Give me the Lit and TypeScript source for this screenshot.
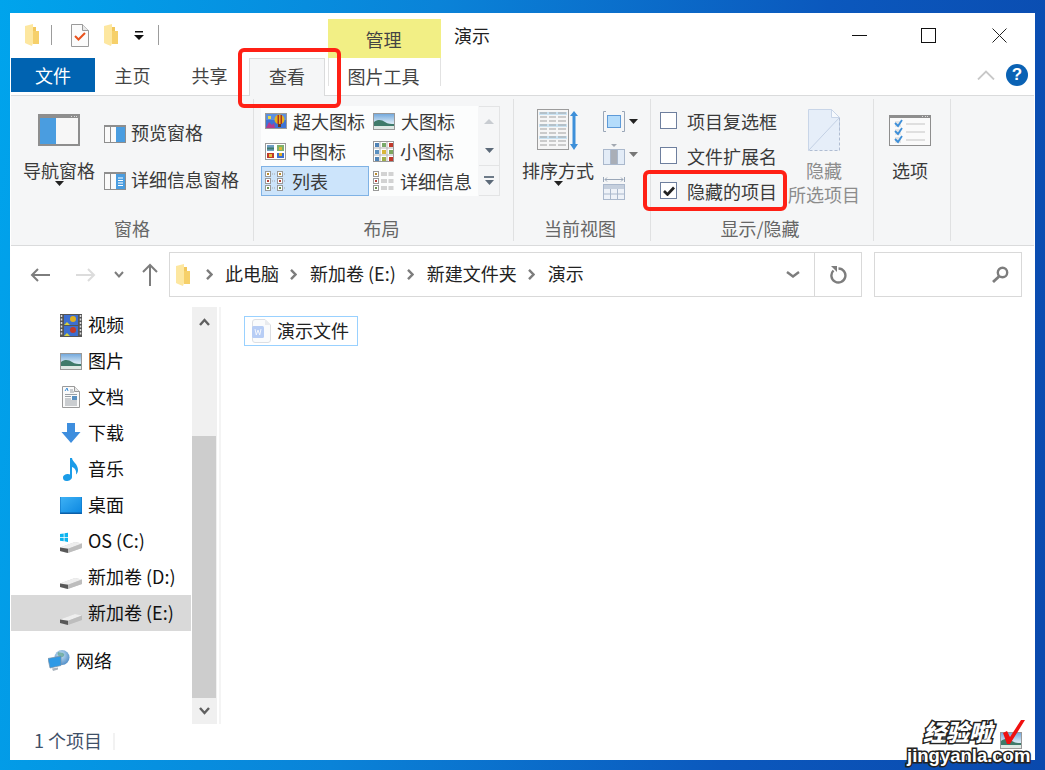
import { LitElement, html, css, svg } from "lit";
import { customElement } from "lit/decorators.js";

const icon = (w: number, h: number, body: unknown) =>
  html`<svg class="ico" width=${w} height=${h} viewBox="0 0 ${w} ${h}" fill="none">${body}</svg>`;

const folder = () => icon(14, 22, svg`
  <path d="M8 7h6v13H8z" fill="#f6d06a"/>
  <path d="M8 3h3v4H8z" fill="#f2c75c"/>
  <path d="M0 2l8-2v19l-1 3-5-2-2-1z" fill="#fde7a0"/>`);

const triDown = (c = "#222") => icon(9, 5, svg`<path d="M0 0h9L4.5 5z" fill=${c}/>`);
const qatDrop = () => icon(10, 9, svg`<path d="M1 0h8v1.500H1z" fill="#111"/><path d="M0 4h10L5 9z" fill="#111"/>`);

const checkDoc = () => icon(18, 23, svg`
  <path d="M.5.5h11l6 6v16H.5z" fill="#fbfbfb" stroke="#9a9a9a"/>
  <path d="M11.500.5v6h6" fill="#e8e8e8" stroke="#9a9a9a"/>
  <path d="M4 12l3.500 3.500L14 9" stroke="#e8521d" stroke-width="2"/>`);

const paneIcon = (kind: string) => kind === "nav"
  ? icon(42, 32, svg`
    <rect x="1" y="1" width="40" height="30" fill="#f7f7f7" stroke="#8e8e8e" stroke-width="2"/>
    <rect x="2" y="4" width="16" height="26" fill="#4a9de0"/>
    <rect x="2" y="2" width="38" height="2" fill="#8e8e8e"/>
    <path d="M33 2h1v1h-1zM36 2h1v1h-1zM38 2h1v1h-1z" fill="#ddd"/>`)
  : icon(22, 18, svg`
    <rect x=".5" y=".5" width="21" height="17" fill="#fafafa" stroke="#8e8e8e"/>
    <rect x="0" y="0" width="22" height="2" fill="#8e8e8e"/>
    <rect x="6" y="2" width="1" height="15" fill="#8e8e8e"/>
    <rect x="12" y="2" width="9" height="15" fill="#4a9de0"/>
    ${kind === "detail" ? svg`<path d="M14 6h5M14 8.500h5M14 11h5M14 13.500h5" stroke="#fff"/>` : ""}`);

const landscape = () => icon(22, 17, svg`
  <defs><linearGradient id="sky" x1="0" y1="0" x2="0" y2="1"><stop offset="0" stop-color="#6fa6dc"/><stop offset=".55" stop-color="#cfe3f2"/><stop offset="1" stop-color="#f0f5f5"/></linearGradient></defs>
  <rect x=".5" y=".5" width="21" height="16" fill="url(#sky)" stroke="#999"/>
  <path d="M1 9c4-3 8-2 11 0s6 2 9 2v2H1z" fill="#3f7a6a"/>
  <path d="M1 13h20v3H1z" fill="#dfe8e4"/>`);

const balloon = () => icon(22, 16, svg`
  <rect x=".5" y=".5" width="21" height="15" fill="#3d73d6" stroke="#9a9a9a"/>
  <rect x="1" y="1" width="20" height="6" fill="#5b8fe0"/>
  <ellipse cx="14.500" cy="6.500" rx="5" ry="5" fill="#e4b21c"/>
  <path d="M12.500 2h1.500v9h-1.500zM15.500 2H17v9h-1.500z" fill="#a8301f"/>
  <rect x="13" y="11" width="3" height="3" fill="#6a3a1c"/>
  <path d="M1 15l3-6 3 3 2-2 1 5z" fill="#b43c8e"/>
  <path d="M3 3h3v3H3z" fill="#e8d84a"/>`);

const medium = () => icon(21, 17, svg`
  <rect x=".5" y=".5" width="20" height="16" fill="#fff" stroke="#999"/>
  <rect x="2" y="2" width="7" height="6" fill="#6f9fc4"/><rect x="2" y="4.500" width="7" height="2" fill="#3f7a6a"/>
  <rect x="12" y="2" width="7" height="6" fill="#7fb06a"/><rect x="14" y="4" width="3" height="3" fill="#d9b63a"/>
  <rect x="2" y="10" width="7" height="5" fill="#c0392b"/><rect x="4" y="11" width="3" height="3" fill="#e4c13c"/>
  <rect x="12" y="10" width="7" height="5" fill="#3d6fd0"/><rect x="14" y="10" width="3" height="3" fill="#e6b020"/>`);

const small = () => {
  const cols = ["#4f83b5", "#79a96a", "#c0392b", "#5a90c0", "#d9b63a", "#7ca85f", "#4f83b5", "#9fb04a", "#c0392b"];
  return icon(21, 21, svg`
    <rect x=".5" y=".5" width="20" height="20" fill="#fff" stroke="#999"/>
    <path d="M7 1v19M14 1v19M1 7h19M1 14h19" stroke="#b5b5b5"/>
    ${cols.map((c, i) => svg`<rect x=${2 + (i % 3) * 7} y=${2 + Math.floor(i / 3) * 7} width="4" height="4" fill=${c}/>`)}`);
};

const listIco = () => icon(21, 20, svg`
  ${[0, 1].map((c) => [0, 1, 2].map((r) => svg`
    <rect x=${0.5 + c * 12} y=${0.5 + r * 7} width="5" height="5" fill="#fff" stroke="#999"/>
    <rect x=${2 + c * 12} y=${2 + r * 7} width="2" height="2" fill=${["#b98a2a", "#b5433a", "#6a8f4c"][r]}/>
    <path d="M${7 + c * 12} ${3 + r * 7}h3" stroke="#a8a8a8" stroke-dasharray="1 1"/>`))}`);

const detailIco = () => icon(21, 20, svg`
  ${[0, 1, 2].map((r) => svg`
    <rect x=".5" y=${0.5 + r * 7} width="5" height="5" fill="#fff" stroke="#999"/>
    <rect x="2" y=${2 + r * 7} width="2" height="2" fill=${["#b98a2a", "#b5433a", "#6a8f4c"][r]}/>
    <path d="M8 ${2 + r * 7}h6M15.500 ${2 + r * 7}h5M8 ${4 + r * 7}h6M15.500 ${4 + r * 7}h5" stroke="#a8a8a8"/>`)}`);

const sortIco = () => icon(42, 42, svg`
  <rect x=".5" y=".5" width="31" height="40" fill="#f6f6f6" stroke="#9c9c9c"/>
  ${[4, 8, 12, 16, 20, 24, 28, 32, 36].map((y, i) => svg`
    <rect x="2" y=${y - 1} width="28" height="3" fill=${i % 3 === 0 ? "#c9e2f2" : "#f6f6f6"}/>
    <path d="M3 ${y}h7M12 ${y}h7M21 ${y}h8" stroke="#a0a0a0"/>`)}
  <path d="M37 2l4 5h-2.500v28H41l-4 6-4-6h2.500V7H33z" fill="#3d8fd9"/>`);

const groupIco = () => icon(22, 21, svg`
  <path d="M3 .5H.5v20H3M19 .5h2.500v20H19" stroke="#9aa7b8"/>
  <rect x="4.500" y="4.500" width="13" height="12" fill="#b4dcfb" stroke="#5e9ad8"/>`);
const colsIco = () => icon(22, 21, svg`
  <path d="M8 0h6l-3 3z" fill="#a3a9b2"/>
  <rect x=".5" y="5.500" width="21" height="15" fill="#e3ecf7" stroke="#aab8cc"/>
  <rect x="8" y="6" width="6" height="14" fill="#a9aeb7"/>
  <path d="M7.500 6v14M14.500 6v14" stroke="#aab8cc"/>`);
const fitIco = () => icon(22, 23, svg`
  <path d="M.5 0v5M21.500 0v5M2 2.500h18" stroke="#9aa7b8"/>
  <path d="M4 .5l-2 2 2 2M18 .5l2 2-2 2" stroke="#9aa7b8"/>
  <rect x=".5" y="7.500" width="21" height="15" fill="#eef2f8" stroke="#aab8cc"/>
  <rect x="1" y="8" width="20" height="4" fill="#c5cfdd"/>
  <path d="M7.500 12v10M14.500 12v10M1 17h20" stroke="#aab8cc"/>`);

const hideIco = () => icon(32, 42, svg`
  <path d="M.5.5h23l8 8v33H.5z" fill="#e6eef9"/>
  <path d="M.5 41.500V.5h23l8 8v14" stroke="#c8d5e8"/>
  <path d="M31.500 8.500v33H.5" stroke="#b0bdd2" stroke-dasharray="3 2"/>
  <path d="M31.500 8.500L.5 41.500" stroke="#c3d0e4"/>
  <path d="M23.500.5v8h8z" fill="#f6f9fd" stroke="#c8d5e8"/>`);

const optIco = () => icon(42, 31, svg`
  <rect x=".5" y=".5" width="41" height="30" fill="#fafafa" stroke="#8e8e8e"/>
  <rect x="0" y="0" width="42" height="3" fill="#8e8e8e"/>
  <path d="M33 1h1v1h-1zM36 1h1v1h-1zM38 1h1v1h-1z" fill="#ddd"/>
  ${[6, 14, 22].map((y) => svg`
    <rect x="6" y=${y} width="6" height="6" fill="#e5e5e5"/>
    <path d="M6 ${y + 2}l3 3 4-6" stroke="#3d8fd9" stroke-width="1.800"/>
    <path d="M17 ${y + 3}h19" stroke="#c4c4c4"/>`)}`);

const chev = (c = "#7d7d7d") => icon(7, 11, svg`<path d="M1 .8l4.500 4.700L1 10.200" stroke=${c} stroke-width="2.400"/>`);
const arrowL = (c: string, flip = false) => icon(20, 14, svg`
  <path d=${flip ? "M0 7h18M12 1l6 6-6 6" : "M20 7H2M8 1L2 7l6 6"} stroke=${c} stroke-width="2"/>`);
const chevDown = (w = 10, c = "#7d7d7d", sw = 2) => icon(w, 7, svg`<path d="M1 1l${(w - 2) / 2} 4.500L${w - 1} 1" stroke=${c} stroke-width=${sw}/>`);
const up = () => icon(16, 23, svg`<path d="M8 23V2M1 9l7-7 7 7" stroke="#7d7d7d" stroke-width="2"/>`);

const refresh = () => icon(17, 18, svg`
  <path d="M3.500 4.500a7 7 0 1 0 5-2" stroke="#7d7d7d" stroke-width="2.400"/>
  <path d="M1 0h6v6z" fill="#7d7d7d"/>`);
const search = () => icon(17, 17, svg`
  <circle cx="10.500" cy="6.500" r="4.700" stroke="#7d7d7d" stroke-width="2.400"/>
  <path d="M7 10.500L1 16" stroke="#7d7d7d" stroke-width="2.800"/>`);

const video = () => icon(22, 23, svg`
  <rect width="22" height="23" fill="#555"/>
  <path d="M1.500 1v21M20.500 1v21" stroke="#ddd" stroke-width="1.500" stroke-dasharray="2 1.500"/>
  <rect x="4" y="1" width="14" height="10" fill="#3d6fd0"/><rect x="4" y="12" width="14" height="10" fill="#3d6fd0"/>
  <circle cx="13" cy="5" r="3" fill="#e0b020"/><circle cx="13" cy="16" r="3" fill="#c23a2a"/>
  <path d="M4 11l3-3 3 3zM4 22l3-3 3 3z" fill="#d6d23c"/>`);
const docIco = () => icon(18, 22, svg`
  <path d="M.5.5h12l5 5v16H.5z" fill="#fafafa" stroke="#9a9a9a"/>
  <path d="M12.500.5v5h5" fill="#e8e8e8" stroke="#9a9a9a"/>
  <path d="M3 5l2-3 1 3" stroke="#3d8fd9"/>
  <path d="M8 4h3M8 6h4M3 8.500h12M3 10.500h6M3 13h6M3 15h12M3 17h12M3 19h12" stroke="#9aa0a6"/>
  <rect x="10" y="10" width="5" height="4" fill="#5a90c0"/>`);
const dl = () => icon(20, 20, svg`<path d="M6 0h8v9h5.500L10 20 .5 9H6z" fill="#3e8ede"/>`);
const music = () => icon(17, 23, svg`
  <path d="M7 0h2c.5 4 6 6 6 12 0 2-1 3.500-2 4.500 .6-3-.6-6.500-4-7.500V19c0 2.500-3 4-5.500 4S0 21.500 0 19.500 2.500 16 5 16c.8 0 1.500.2 2 .5z" fill="#1b9ce8"/>`);
const desk = () => icon(22, 17, svg`
  <defs><linearGradient id="dk" x1="0" y1="0" x2="1" y2="1"><stop offset="0" stop-color="#3fb2f5"/><stop offset="1" stop-color="#0a86e0"/></linearGradient></defs>
  <rect width="22" height="17" fill="url(#dk)"/><rect x="0" y="15.500" width="22" height="1.500" fill="#0b5fa8"/>
  <path d="M0 0v17M22 0v17" stroke="#0b6fc0"/>`);
const driveBody = svg`
  <path d="M0 17.500l15-5.500 7 1.500v4.500L7 23l-7-2z" fill="#cfcfcf"/>
  <path d="M0 17.500l15-5.500 7 1.500-14 5.200z" fill="#eeeeee"/>
  <path d="M0 17.500l8 1.200V23l-8-2z" fill="#585858"/>
  <path d="M8 18.700L22 13.500v4.500L8 23z" fill="#bdbdbd"/>`;
const drive = () => icon(22, 23, driveBody);
const osDrive = () => icon(22, 23, svg`
  ${driveBody}
  <path d="M0 4l3.700-.6v3.500H0zM4.500 3.300L8 2.700v4.200H4.500zM0 7.700h3.700v3.500L0 10.700zM4.500 7.700H8v4.200l-3.500-.6z" fill="#0cb4ef"/>`);
const net = () => icon(22, 22, svg`
  <defs><radialGradient id="gl" cx=".4" cy=".35" r=".8"><stop offset="0" stop-color="#cfe6f7"/><stop offset="1" stop-color="#3b7fc0"/></radialGradient></defs>
  <circle cx="14" cy="7.500" r="7.500" fill="url(#gl)"/>
  <path d="M10 2c2 1 5 0 6 2s-2 4-4 3-3-3-2-5z" fill="#4f9a7a" opacity=".6"/>
  <path d="M0 8.500l13-2.500v9.500L2 18z" fill="#2f9ae6" stroke="#7a8fa3" stroke-width=".7"/>
  <path d="M4 18.500l6-1v2l-5 1.500z" fill="#a9b3bd"/>`);
const wps = () => icon(19, 24, svg`
  <path d="M3 .5h10l5.500 5.500v15a2.500 2.500 0 0 1-2.500 2.500H3A2.500 2.500 0 0 1 .5 21V3A2.500 2.500 0 0 1 3 .5z" fill="#fafbfc" stroke="#dcdfe4"/>
  <path d="M13 .5V6h5.500z" fill="#e9ebee"/>
  <rect x="0" y="7" width="12" height="12" rx="1.500" fill="#b7cdf5"/>
  <path d="M3 10l1.300 6 1.700-5 1.700 5L9 10" stroke="#f3f6fd" stroke-width="1"/>`);

@customElement("app-root")
export class AppRoot extends LitElement {
  static styles = css`
    :host {
      display: block;
      position: relative;
      width: 1045px;
      height: 770px;
      box-sizing: border-box;
      padding: 13px 10px 10px;
      overflow: hidden;
      background: linear-gradient(98deg, #00a4ec 0%, #0a83d8 38%, #0b58bd 72%, #0a49ad 100%);
      font-family: "Noto Sans CJK SC", "Noto Sans", sans-serif;
      font-size: 18px;
      color: #3a3a3a;
    }
    * { box-sizing: border-box; }
    .ico { display: block; flex: none; }
    .up1 { display: block; padding-bottom: 2px; }
    .up2 { display: block; padding-bottom: 4px; }

    .win { height: 747px; background: #fff; display: flex; flex-direction: column; padding: 0 1px; }

    .title { height: 45px; display: flex; align-items: flex-start; }
    .qat { display: flex; align-items: center; height: 44px; padding-left: 14px; width: 317px; }
    .qat .sep { width: 1px; height: 20px; background: #9c9c9c; }
    .qat .s1 { margin-left: 12px; margin-right: 19px; }
    .qat .q2 { margin-left: 15px; }
    .qat .q3 { margin-left: 16px; }
    .qat .s2 { margin-left: 14px; }
    .manage {
      margin-top: 6px; width: 113px; height: 39px; background: #f2ef85; padding-right: 2px;
      display: flex; align-items: center; justify-content: center; color: #444;
    }
    .doc-title { margin-left: 13px; height: 44px; display: flex; align-items: center; color: #222; }
    .ctrls { margin-left: auto; display: flex; }
    .ctrl { width: 70px; height: 44px; display: flex; align-items: center; justify-content: center; }
    .ctrl.c2 { padding-right: 2px; }

    .tabs { height: 38px; display: flex; align-items: flex-start; border-bottom: 1px solid #dadbdc; }
    .tab { height: 34px; display: flex; align-items: center; justify-content: center; color: #444; }
    .t-file { width: 84px; background: #0063b1; color: #fff; }
    .t-n { width: 77px; padding-right: 2px; }
    .t-active {
      width: 76px; height: 38px; background: #f5f6f7; position: relative;
      border: 1px solid #dadbdc; border-bottom: none; padding-bottom: 3px; margin-top: 0;
    }
    .t-tool { width: 113px; margin-left: 3px; height: 28px; padding: 8px 2px 0 0; border-left: 1px solid #e2e2e2; border-right: 1px solid #e2e2e2; }
    .tabs .right { margin-left: auto; display: flex; align-items: center; height: 34px; gap: 11px; padding-right: 6px; }
    .help {
      width: 22px; height: 22px; border-radius: 50%; background: #0a62b4; color: #fff;
      display: flex; align-items: center; justify-content: center; font: bold 17px "Liberation Sans", sans-serif;
    }

    .ribbon { height: 150px; background: #f5f6f7; border-bottom: 1px solid #dadbdc; display: flex; }
    .grp { margin: 3px 0 4px; border-right: 1px solid #e0e1e2; display: flex; flex-direction: column; flex: none; }
    .g1 { width: 243px; }
    .g2 { width: 260px; }
    .g3 { width: 137px; }
    .g4 { width: 223px; }
    .g5 { width: 77px; }
    .body { flex: 1; display: flex; min-height: 0; }
    .lbl { height: 24px; line-height: 22px; text-align: center; color: #666; }
    .lbl.nudge { padding-right: 4px; }

    .big { display: flex; flex-direction: column; align-items: center; padding-top: 10px; color: #3a3a3a; flex: none; }
    .slot { height: 42px; display: flex; align-items: center; justify-content: center; margin-bottom: 7px; }
    .big span { line-height: 24px; white-space: nowrap; }
    .big .tri { margin-top: -1px; }
    .nav-b { margin-left: 12px; width: 72px; }
    .pane-col { margin-left: 9px; padding-top: 23px; display: flex; flex-direction: column; gap: 23px; }
    .pane { display: flex; align-items: center; height: 24px; gap: 5px; white-space: nowrap; }

    .gal { margin: 7px 0 0 7px; width: 217px; height: 90px; background: #fcfdfd; display: grid; grid-template-columns: 108px 109px; grid-auto-rows: 30px; flex: none; }
    .gi { display: flex; align-items: center; gap: 6px; padding-left: 4px; white-space: nowrap; }
    .gi.sel { background: #cce4fb; border: 1px solid #7fb2e5; padding-left: 3px; }
    .gi span { display: block; padding-bottom: 1px; }
    .gscroll { margin-top: 7px; margin-left: 1px; width: 21px; height: 90px; border: 1px solid #e3e4e5; border-left: none; display: flex; flex-direction: column; }
    .gscroll div { flex: 1; display: flex; align-items: center; justify-content: center; }
    .gscroll .more { flex-direction: column; gap: 2px; border-top: 1px solid #e3e4e5; }
    .bar { width: 10px; height: 1.500px; background: #6d7a88; }

    .sort-b { margin-left: 8px; width: 72px; }
    .vw-col { margin-left: 9px; padding-top: 12px; display: flex; flex-direction: column; gap: 12px; }
    .vw { display: flex; align-items: flex-start; gap: 4px; }
    .vw .a { margin-top: 8px; }

    .chk-col { margin-left: 9px; padding-top: 4px; display: flex; flex-direction: column; }
    .chk { height: 35px; display: flex; align-items: center; gap: 10px; white-space: nowrap; }
    .box { width: 17px; height: 17px; border: 1px solid #6e7f9e; background: #fff; display: flex; align-items: center; justify-content: center; }
    .hide-b { margin-left: 11px; width: 72px; color: #8c8c8c; }
    .hide-b span { color: #8c8c8c; }
    .opt-b { margin-left: 15px; width: 42px; }

    .addr { height: 51px; padding-top: 6px; display: flex; align-items: flex-start; }
    .nv { height: 45px; display: flex; align-items: center; }
    .n1 { margin-left: 19px; }
    .n2 { margin-left: 26px; }
    .n3 { margin-left: 18px; }
    .n4 { margin-left: 18px; margin-right: 11px; }
    .abox { width: 693px; height: 45px; border: 1px solid #d9d9d9; display: flex; align-items: center; color: #222; }
    .crumbs { width: 645px; height: 100%; display: flex; align-items: center; padding-left: 6px; border-right: 1px solid #d9d9d9; white-space: nowrap; }
    .crumbs .c0 { margin: 0 12px 0 16px; }
    .crumbs .cn { margin: 0 13px 0 11px; }
    .crumbs .end { margin-left: auto; margin-right: 14px; }
    .rf { flex: 1; display: flex; justify-content: center; }
    .sbox { margin-left: 12px; width: 148px; height: 45px; border: 1px solid #d9d9d9; display: flex; align-items: center; justify-content: flex-end; padding-right: 12px; }

    .main { flex: 1; display: flex; min-height: 0; }
    .side { width: 180px; padding-top: 10px; color: #111; flex: none; }
    .it { height: 36px; display: flex; align-items: center; padding-left: 49px; }
    .it .slotic { width: 22px; display: flex; justify-content: center; margin-right: 6px; }
    .it.sel { background: #d9d9d9; }
    .it.netw { margin-top: 12px; padding-left: 37px; }
    .sb { margin: 10px 0 1px 1px; width: 25px; background: #f0f0f0; display: flex; flex-direction: column; flex: none; }
    .sb .top { height: 129px; padding-top: 11px; display: flex; justify-content: center; }
    .sb .th { flex: 1; background: #cdcdcd; margin-right: 1px; }
    .sb .bot { height: 26px; display: flex; justify-content: center; padding-top: 9px; }
    .rule { margin: 10px 0 1px 2px; width: 2px; background: #f4f4f4; flex: none; }
    .files { flex: 1; padding: 19px 0 0 23px; }
    .file { width: 114px; height: 30px; border: 1px solid #99d1ff; display: flex; align-items: center; padding-left: 7px; gap: 6px; color: #222; white-space: nowrap; }

    .status { height: 35px; display: flex; align-items: flex-start; padding-left: 23px; color: #3f5068; flex: none; }
    .status span { line-height: 30px; }
    .status i { display: block; width: 2px; height: 17px; margin: 8px 0 0 11px; background: #f2f2f2; }

    .mark { position: absolute; border: 4.500px solid #ff2015; border-radius: 6px; pointer-events: none; }
    .m1 { left: 238px; top: 48px; width: 103px; height: 60px; }
    .m2 { left: 643px; top: 170px; width: 144px; height: 41px; }

    .wm { position: absolute; left: 906px; top: 719px; width: 125px; height: 50px; pointer-events: none; }
    .wm .cn, .wm .en {
      position: absolute; white-space: nowrap; color: #fff; font-weight: 900; -webkit-text-stroke: 3px #222; paint-order: stroke fill;
    }
    .wm .cn { left: 17px; top: 0; font-size: 23px; line-height: 24px; font-style: italic; }
    .wm .en { left: 1px; top: 27px; font: bold 18.500px/20px "Liberation Sans", sans-serif; }
    .wm .pic { position: absolute; left: 94px; top: 13px; }
    .wm .v { position: absolute; left: 95px; top: 0; }
  `;

  render() {
    const gal = [
      [balloon(), "超大图标", ""],
      [landscape(), "大图标", ""],
      [medium(), "中图标", ""],
      [small(), "小图标", ""],
      [listIco(), "列表", "sel"],
      [detailIco(), "详细信息", ""],
    ];
    const side = [
      [video(), "视频", ""], [landscape(), "图片", ""], [docIco(), "文档", ""],
      [dl(), "下载", ""], [music(), "音乐", ""], [desk(), "桌面", ""],
      [osDrive(), "OS (C:)", ""], [drive(), "新加卷 (D:)", ""], [drive(), "新加卷 (E:)", "sel"],
    ];
    return html`
      <div class="win">
        <div class="title">
          <div class="qat">
            ${folder()}<div class="sep s1"></div>
            ${checkDoc()}<div class="q2">${folder()}</div><div class="q3">${qatDrop()}</div>
            <div class="sep s2"></div>
          </div>
          <div class="manage">管理</div>
          <div class="doc-title">演示</div>
          <div class="ctrls">
            <div class="ctrl">${icon(15, 1, svg`<rect width="15" height="1" fill="#111"/>`)}</div>
            <div class="ctrl c2">${icon(15, 15, svg`<rect x=".5" y=".5" width="14" height="14" stroke="#111"/>`)}</div>
            <div class="ctrl">${icon(15, 15, svg`<path d="M.5.5l14 14M14.500.5l-14 14" stroke="#222"/>`)}</div>
          </div>
        </div>

        <div class="tabs">
          <div class="tab t-file">文件</div>
          <div class="tab t-n">主页</div>
          <div class="tab t-n">共享</div>
          <div class="tab t-active">查看</div>
          <div class="tab t-tool">图片工具</div>
          <div class="right">
            ${icon(18, 10, svg`<path d="M1 9.500l8-8 8 8" stroke="#c8c8c8" stroke-width="1.800"/>`)}
            <div class="help">?</div>
          </div>
        </div>

        <div class="ribbon">
          <div class="grp g1">
            <div class="body">
              <div class="big nav-b">
                <div class="slot">${paneIcon("nav")}</div>
                <span>导航窗格</span><div class="tri">${triDown()}</div>
              </div>
              <div class="pane-col">
                <div class="pane">${paneIcon("preview")}<span class="up2">预览窗格</span></div>
                <div class="pane">${paneIcon("detail")}<span class="up2">详细信息窗格</span></div>
              </div>
            </div>
            <div class="lbl">窗格</div>
          </div>
          <div class="grp g2">
            <div class="body">
              <div class="gal">
                ${gal.map(([i, t, c]) => html`<div class="gi ${c}">${i}<span>${t}</span></div>`)}
              </div>
              <div class="gscroll">
                <div>${icon(10, 5, svg`<path d="M0 5h10L5 0z" fill="#c8ccd1"/>`)}</div>
                <div>${triDown("#5c6a79")}</div>
                <div class="more"><i class="bar"></i>${triDown("#5c6a79")}</div>
              </div>
            </div>
            <div class="lbl nudge">布局</div>
          </div>
          <div class="grp g3">
            <div class="body">
              <div class="big sort-b">
                <div class="slot">${sortIco()}</div>
                <span>排序方式</span><div class="tri">${triDown()}</div>
              </div>
              <div class="vw-col">
                <div class="vw">${groupIco()}<div class="a">${triDown()}</div></div>
                <div class="vw">${colsIco()}<div class="a">${triDown("#777")}</div></div>
                <div class="vw">${fitIco()}</div>
              </div>
            </div>
            <div class="lbl nudge">当前视图</div>
          </div>
          <div class="grp g4">
            <div class="body">
              <div class="chk-col">
                <div class="chk"><div class="box"></div>项目复选框</div>
                <div class="chk"><div class="box"></div>文件扩展名</div>
                <div class="chk"><div class="box">${icon(12, 10, svg`<path d="M1 5l3.500 3.500L11 1.500" stroke="#222" stroke-width="2.700"/>`)}</div>隐藏的项目</div>
              </div>
              <div class="big hide-b">
                <div class="slot">${hideIco()}</div>
                <span>隐藏</span><span>所选项目</span>
              </div>
            </div>
            <div class="lbl nudge">显示/隐藏</div>
          </div>
          <div class="grp g5">
            <div class="body">
              <div class="big opt-b">
                <div class="slot">${optIco()}</div>
                <span>选项</span>
              </div>
            </div>
            <div class="lbl"></div>
          </div>
        </div>

        <div class="addr">
          <div class="nv n1">${arrowL("#7d7d7d")}</div>
          <div class="nv n2">${arrowL("#dcdcdc", true)}</div>
          <div class="nv n3">${chevDown(10)}</div>
          <div class="nv n4">${up()}</div>
          <div class="abox">
            <div class="crumbs">
              ${folder()}
              <div class="c0">${chev()}</div><span class="up2">此电脑</span>
              <div class="cn">${chev()}</div><span class="up2">新加卷 (E:)</span>
              <div class="cn">${chev()}</div><span class="up2">新建文件夹</span>
              <div class="cn">${chev()}</div><span class="up2">演示</span>
              <div class="end">${chevDown(14, "#7d7d7d", 2.4)}</div>
            </div>
            <div class="rf">${refresh()}</div>
          </div>
          <div class="sbox">${search()}</div>
        </div>

        <div class="main">
          <div class="side">
            ${side.map(([i, t, c]) => html`<div class="it ${c}"><div class="slotic">${i}</div><span class="up1">${t}</span></div>`)}
            <div class="it netw"><div class="slotic">${net()}</div><span class="up1">网络</span></div>
          </div>
          <div class="sb">
            <div class="top">${icon(11, 8, svg`<path d="M1 7l4.500-5L10 7" stroke="#606060" stroke-width="2.400"/>`)}</div>
            <div class="th"></div>
            <div class="bot">${icon(11, 8, svg`<path d="M1 1l4.500 5L10 1" stroke="#606060" stroke-width="2.400"/>`)}</div>
          </div>
          <div class="rule"></div>
          <div class="files">
            <div class="file">${wps()}<span class="up1">演示文件</span></div>
          </div>
        </div>

        <div class="status"><span>1 个项目</span><i></i></div>
      </div>

      <div class="mark m1"></div>
      <div class="mark m2"></div>

      <div class="wm">
        <div class="pic">${landscape()}</div>
        <div class="cn">经验啦</div>
        <div class="en">jingyanla.com</div>
        <div class="v">${icon(24, 26, svg`<path d="M2 14l4-2 3 6L20 1h4L9 25H6z" fill="#f01010"/>`)}</div>
      </div>
    `;
  }
}
